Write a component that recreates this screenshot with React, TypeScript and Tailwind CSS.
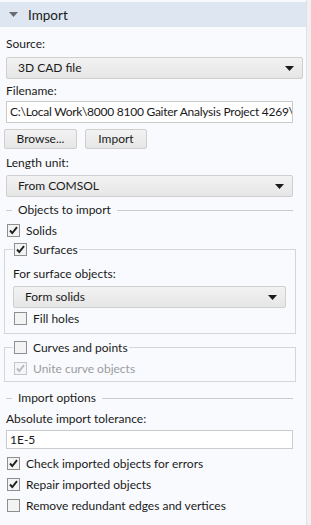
import React from "react";

function Caret({ className = "" }: { className?: string }) {
  return (
    <svg width="9" height="5" viewBox="0 0 9 5" className={className}>
      <path d="M0 0h9L4.5 5z" fill="#1b1b1b" />
    </svg>
  );
}

function Check({ checked, disabled }: { checked?: boolean; disabled?: boolean }) {
  return (
    <span
      className={`flex h-[13px] w-[13px] shrink-0 items-center justify-center border ${
        disabled ? "border-[#c4c6ca] bg-[#f4f5f8]" : "border-[#8e8f8f] bg-[#f3f3f3]"
      }`}
    >
      {checked && (
        <svg width="11" height="11" viewBox="0 0 11 11">
          <path
            d="M2 5.5l2.3 2.6L9 2.2"
            fill="none"
            stroke={disabled ? "#b8babd" : "#1e1e1e"}
            strokeWidth="1.9"
          />
        </svg>
      )}
    </span>
  );
}

function CheckRow({
  label,
  checked,
  disabled,
  className = "",
}: {
  label: string;
  checked?: boolean;
  disabled?: boolean;
  className?: string;
}) {
  return (
    <div className={`flex h-[21px] items-center gap-[6px] leading-[16px] ${className}`}>
      <Check checked={checked} disabled={disabled} />
      <span className={disabled ? "text-[#9a9ca0]" : ""}>{label}</span>
    </div>
  );
}

function Select({ value, className = "" }: { value: string; className?: string }) {
  return (
    <div
      className={`flex h-[22px] items-center justify-between rounded-[2px] border border-[#cfcfcf] bg-gradient-to-b from-[#f2f2f2] to-[#e6e6e6] pl-[11px] pr-[8px] ${className}`}
    >
      <span>{value}</span>
      <Caret />
    </div>
  );
}

function Label({ text, className = "" }: { text: string; className?: string }) {
  return <div className={`h-[18px] leading-[18px] ${className}`}>{text}</div>;
}

function Section({ title, className = "" }: { title: string; className?: string }) {
  return (
    <div className={`flex h-[18px] items-center ${className}`}>
      <span className="h-px w-[6px] bg-[#c9ccd1]" />
      <span className="px-[6px]">{title}</span>
      <span className="h-px flex-1 bg-[#c9ccd1]" />
    </div>
  );
}

export default function App() {
  return (
    <div
      className="flex h-[525px] w-[311px] bg-[#f0f0f0] text-[12px] leading-[18px] text-[#1a1a1a]"
      style={{ fontFamily: "Lato, sans-serif" }}
    >
      <div className="flex w-[307px] flex-col border-r border-[#dfe1e5] bg-[#f9fafe] pt-[2px]">
        <div className="flex h-[25px] items-center bg-[#dde6f1] pl-[9px] text-[13.5px]">
          <Caret className="opacity-60" />
          <span className="ml-[10px]">Import</span>
        </div>

        <div className="flex flex-col px-[6px]">
          <Label text="Source:" className="mt-[8px]" />
          <Select value="3D CAD file" className="mt-[4px] w-[297px]" />
          <Label text="Filename:" className="mt-[3px]" />
          <div className="mt-[1px] flex h-[22px] w-[287px] items-center overflow-hidden whitespace-nowrap border border-[#cbcbcb] bg-white pl-[3px] tracking-[-0.25px]">
            C:\Local Work\8000 8100 Gaiter Analysis Project 4269\
          </div>
          <div className="ml-[-2px] mt-[6px] flex gap-[8px]">
            <button className="h-[20px] w-[73px] rounded-[2px] border border-[#cfcfcf] bg-gradient-to-b from-[#f2f2f2] to-[#e6e6e6]">
              Browse...
            </button>
            <button className="h-[20px] w-[62px] rounded-[2px] border border-[#cfcfcf] bg-gradient-to-b from-[#f2f2f2] to-[#e6e6e6]">
              Import
            </button>
          </div>
          <Label text="Length unit:" className="mt-[5px]" />
          <Select value="From COMSOL" className="mt-[3px] w-[287px]" />

          <Section title="Objects to import" className="mt-[4px] w-[287px]" />
          <CheckRow label="Solids" checked className="mt-[1px] pl-[1px]" />

          <fieldset className="ml-[-2px] mt-[-2px] w-[292px] border border-[#d3d6db] px-[8px] pb-[4px]">
            <legend className="px-[1px]">
              <CheckRow label="Surfaces" checked />
            </legend>
            <Label text="For surface objects:" className="mt-[5px]" />
            <Select value="Form solids" className="mt-[3px] w-[273px]" />
            <CheckRow label="Fill holes" className="pl-[1px]" />
          </fieldset>

          <fieldset className="ml-[-2px] mt-[3px] w-[292px] border border-[#d3d6db] px-[8px] pb-[2px]">
            <legend className="px-[1px]">
              <CheckRow label="Curves and points" />
            </legend>
            <CheckRow label="Unite curve objects" checked disabled className="pl-[1px]" />
          </fieldset>

          <Section title="Import options" className="mt-[7px] w-[287px]" />
          <Label text="Absolute import tolerance:" className="mt-[3px]" />
          <div className="mt-[2px] flex h-[19px] w-[287px] items-center border border-[#cbcbcb] bg-white pl-[3px]">
            1E-5
          </div>
          <CheckRow label="Check imported objects for errors" checked className="mt-[4px] pl-[1px]" />
          <CheckRow label="Repair imported objects" checked className="pl-[1px]" />
          <CheckRow label="Remove redundant edges and vertices" className="pl-[1px]" />
        </div>
      </div>
    </div>
  );
}
